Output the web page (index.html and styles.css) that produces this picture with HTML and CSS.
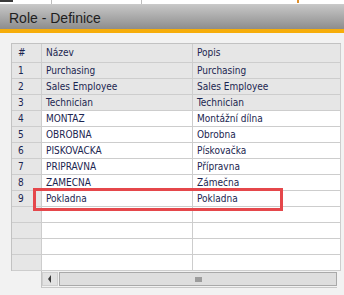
FILE: index.html
```html
<!DOCTYPE html>
<html>
<head>
<meta charset="utf-8">
<link rel="stylesheet" href="styles.css">
</head>
<body>
<div class="topstrip">
  <span class="frag"></span>
  <span class="sep sep1"></span>
  <span class="sep sep2"></span>
  <span class="mark"></span>
</div>
<div class="titlebar"><span class="title">Role - Definice</span></div>
<div class="accent"></div>
<div class="content">
  <div class="gridwrap">
    <div class="grid">
      <div class="cell hdr num">#</div><div class="cell hdr">Název</div><div class="cell hdr">Popis</div>
      <div class="cell num">1</div><div class="cell grey">Purchasing</div><div class="cell grey">Purchasing</div>
      <div class="cell num">2</div><div class="cell grey">Sales Employee</div><div class="cell grey">Sales Employee</div>
      <div class="cell num">3</div><div class="cell grey">Technician</div><div class="cell grey">Technician</div>
      <div class="cell num">4</div><div class="cell">MONTAZ</div><div class="cell">Montážní dílna</div>
      <div class="cell num">5</div><div class="cell">OBROBNA</div><div class="cell">Obrobna</div>
      <div class="cell num">6</div><div class="cell">PISKOVACKA</div><div class="cell">Pískovačka</div>
      <div class="cell num">7</div><div class="cell">PRIPRAVNA</div><div class="cell">Přípravna</div>
      <div class="cell num">8</div><div class="cell">ZAMECNA</div><div class="cell">Zámečna</div>
      <div class="cell num">9</div><div class="cell">Pokladna</div><div class="cell">Pokladna</div>
      <div class="cell num"></div><div class="cell"></div><div class="cell"></div>
      <div class="cell num"></div><div class="cell"></div><div class="cell"></div>
      <div class="cell num"></div><div class="cell"></div><div class="cell"></div>
      <div class="cell num"></div><div class="cell"></div><div class="cell"></div>
    </div>
    <div class="hscroll">
      <div class="arrowbtn"><span class="tri"></span></div>
      <div class="thumb"><span class="grip"></span></div>
    </div>
    <div class="highlight"></div>
  </div>
</div>
</body>
</html>
```
FILE: styles.css
```css
html, body {
  margin: 0;
  padding: 0;
}
body {
  width: 344px;
  height: 295px;
  overflow: hidden;
  background: #f2f2f2;
  font-family: "Liberation Sans", Arial, sans-serif;
}
.topstrip {
  position: relative;
  height: 4px;
  background: #ffffff;
  border-bottom: 1px solid #c9c9c9;
}
.frag {
  position: absolute;
  left: 0;
  top: 0;
  width: 13px;
  height: 2px;
  background: #3a3a3a;
}
.sep {
  position: absolute;
  top: 0;
  width: 1px;
  height: 4px;
  background: #bdbdbd;
}
.sep1 { left: 51px; }
.sep2 { left: 141px; }
.mark {
  position: absolute;
  left: 297px;
  top: 0;
  width: 2px;
  height: 3px;
  background: #e0902a;
}
.titlebar {
  height: 24px;
  display: flex;
  align-items: center;
  padding-left: 9px;
  background: linear-gradient(#c6c6c6, #8d8d8d);
}
.title {
  font-size: 14px;
  color: #1e1e1e;
  padding-top: 2px;
}
.accent {
  height: 4px;
  background: #f6ad0a;
}
.content {
  padding: 10px 0 0 11px;
}
.gridwrap {
  position: relative;
  width: 330px;
}
.grid {
  display: grid;
  grid-template-columns: 30px 151px 148px;
  grid-template-rows: 19px;
  grid-auto-rows: 16px;
  border-left: 1px solid #c2c2c2;
  border-top: 1px solid #c2c2c2;
  background: #ffffff;
}
.cell {
  box-sizing: border-box;
  border-right: 1px solid #cdcdcd;
  border-bottom: 1px solid #cdcdcd;
  padding: 0 0 0 4px;
  font-family: "DejaVu Sans Condensed", "Liberation Sans", sans-serif;
  font-size: 10px;
  line-height: 15px;
  color: #1b2550;
  white-space: nowrap;
  overflow: hidden;
}
.cell.hdr {
  line-height: 18px;
  background: #e6e6e6;
}
.cell.num {
  background: #e6e6e6;
  padding-left: 6px;
}
.cell.grey {
  background: #e6e6e6;
}
.hscroll {
  display: flex;
  margin-left: 30px;
  height: 17px;
  box-sizing: border-box;
  border-left: 1px solid #c2c2c2;
  border-bottom: 1px solid #c8c8c8;
  padding: 1px 0 1px 0;
  width: 296px;
}
.arrowbtn {
  width: 16px;
  display: flex;
  align-items: center;
  justify-content: center;
  background: #e2e2e2;
  border: 1px solid #cfcfcf;
  box-sizing: border-box;
}
.tri {
  width: 0;
  height: 0;
  border-top: 4px solid transparent;
  border-bottom: 4px solid transparent;
  border-right: 3px solid #3a3a3a;
  margin-right: 2px;
}
.thumb {
  flex: 1;
  display: flex;
  align-items: center;
  justify-content: center;
  background: #dedede;
  border: 1px solid #a9a9a9;
  box-sizing: border-box;
  margin-left: 1px;
}
.grip {
  width: 7px;
  height: 5px;
  background-image: radial-gradient(circle, #9a9a9a 0.7px, transparent 0.9px);
  background-size: 2px 2px;
  margin-left: 1px;
}
.highlight {
  position: absolute;
  left: 22px;
  top: 145px;
  width: 250px;
  height: 23px;
  box-sizing: border-box;
  border: 3px solid #e5474b;
}
```
